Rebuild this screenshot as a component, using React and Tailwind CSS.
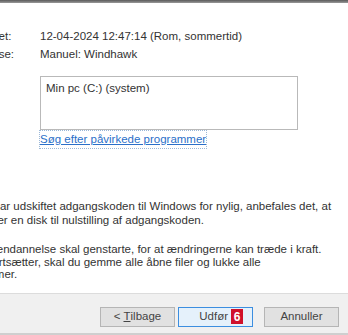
import React from 'react';

const Row = ({ label, children }) => (
  <div className="flex h-[18px] items-center">
    <div className="w-[88px] shrink-0">{label}</div>
    <div>{children}</div>
  </div>
);

const DialogButton = ({ children, primary, badge }) => (
  <button
    className={
      primary
        ? 'relative h-[20px] w-[75px] border border-[#3c8ee0] bg-[#e5f1fb] text-[#444] flex items-center justify-end pr-[24px]'
        : 'h-[20px] w-[75px] border border-[#b5b5b5] bg-[#e1e1e1] text-[#444] flex items-center justify-center'
    }
  >
    {children}
    {badge && (
      <span className="absolute right-[9px] top-[1px] flex h-[15px] w-[12px] items-center justify-center bg-[#d0112b] text-[12px] font-bold leading-none text-white">
        {badge}
      </span>
    )}
  </button>
);

export default function App() {
  return (
    <div
      className="relative flex h-[335px] w-[348px] flex-col overflow-hidden bg-white text-[11.5px] text-[#333]"
      style={{ fontFamily: '"Liberation Sans", Arial, sans-serif' }}
    >
      <div className="h-[3px] shrink-0 bg-gradient-to-b from-[#5a5a5a] to-[#9a9a9a]" />

      <div className="ml-[-48px] flex flex-1 flex-col whitespace-nowrap pt-[25px]">
        <Row label="Klokkeslæt:">12-04-2024 12:47:14 (Rom, sommertid)</Row>
        <Row label="Beskrivelse:">Manuel: Windhawk</Row>

        <div className="mt-[12px] flex">
          <div className="w-[88px] shrink-0 pt-[5px]">Drev:</div>
          <div className="flex flex-col">
            <div className="h-[54px] w-[258px] border border-[#b9b9b9] px-[5px] pt-[3px]">
              Min pc (C:) (system)
            </div>
            <a className="mt-[1px] self-start text-[#2a6fc9] underline outline outline-1 outline-dotted outline-[#9bb8d8]">
              Søg efter påvirkede programmer
            </a>
          </div>
        </div>

        <div className="mt-[52px] leading-[13.5px]">
          <p>Hvis du har udskiftet adgangskoden til Windows for nylig, anbefales det, at</p>
          <p>du opretter en disk til nulstilling af adgangskoden.</p>
        </div>
        <div className="mt-[16px] leading-[12.5px]">
          <p>Systemgendannelse skal genstarte, for at ændringerne kan træde i kraft.</p>
          <p>Før du fortsætter, skal du gemme alle åbne filer og lukke alle</p>
          <p>programmer.</p>
        </div>
      </div>

      <div className="flex h-[40px] shrink-0 items-start justify-end border-t border-[#dcdcdc] bg-[#f0f0f0] pr-[9px] pt-[13px]">
        <div className="flex items-center">
          <DialogButton>
            &lt; <span className="ml-[3px] underline">T</span>ilbage
          </DialogButton>
          <div className="w-[3px]" />
          <DialogButton primary badge="6">
            Udfør
          </DialogButton>
          <div className="w-[11px]" />
          <DialogButton>Annuller</DialogButton>
        </div>
      </div>
      <div className="h-[2px] shrink-0 bg-[#cfcfcf]" />
    </div>
  );
}
